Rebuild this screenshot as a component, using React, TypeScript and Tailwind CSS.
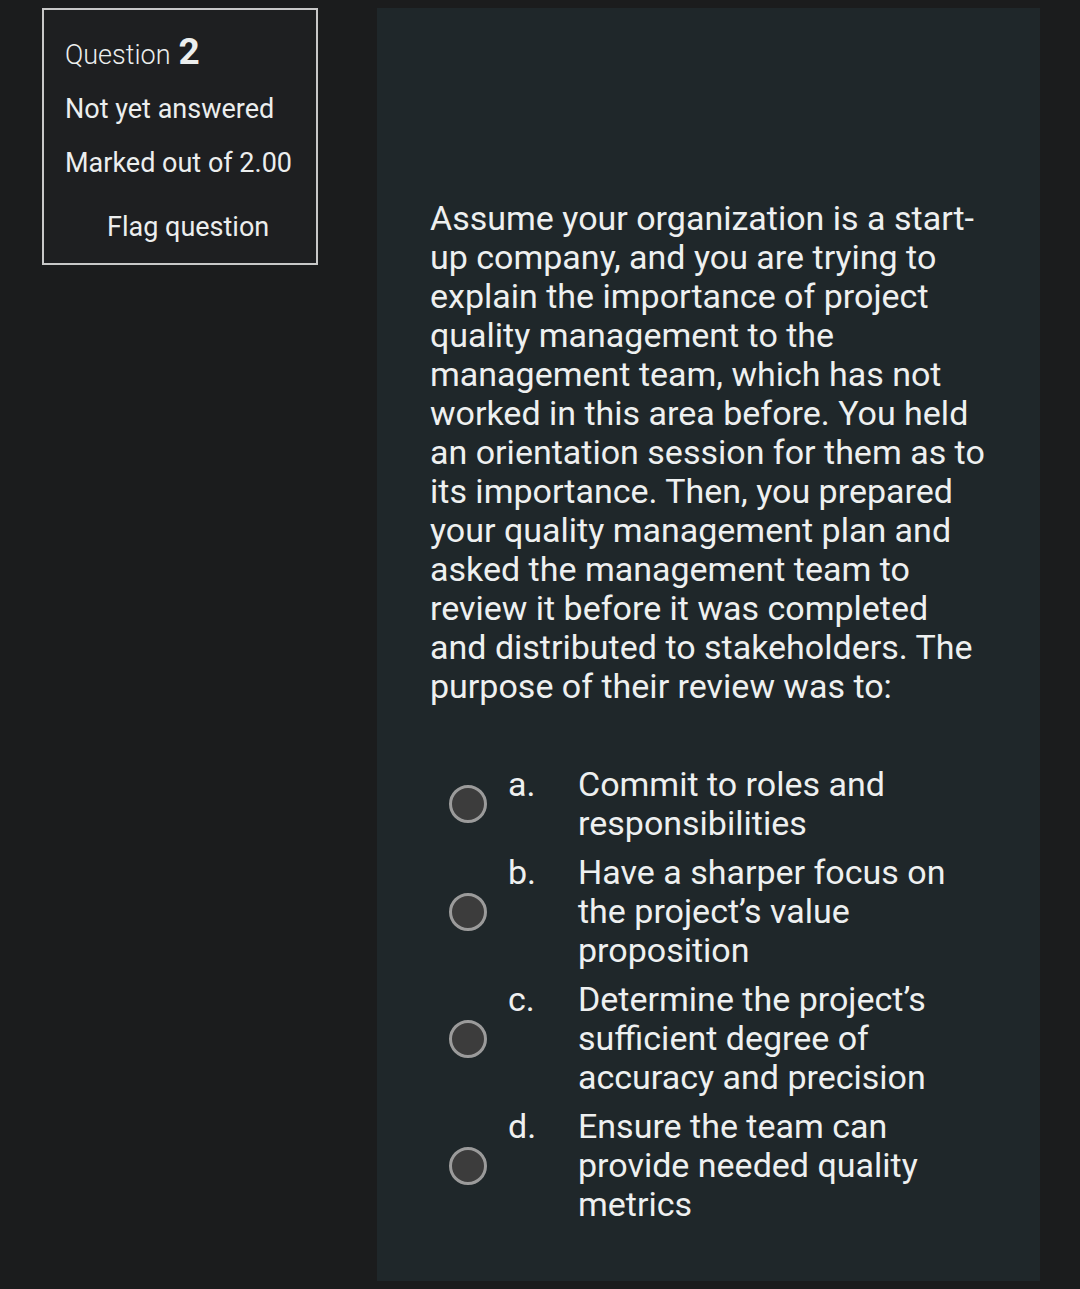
import React from "react";

const options = [
  { l: "a.", t: "Commit to roles and responsibilities" },
  { l: "b.", t: "Have a sharper focus on the project\u2019s value proposition" },
  { l: "c.", t: "Determine the project\u2019s sufficient degree of accuracy and precision" },
  { l: "d.", t: "Ensure the team can provide needed quality metrics" },
];

export default function App() {
  return (
    <div
      className="min-h-[1289px] w-[1080px] bg-[#1b1c1d] flex items-start"
      style={{ fontFamily: "Roboto, 'Noto Sans', sans-serif" }}
    >
      <div className="ml-[42px] mt-[8px] w-[276px] h-[257px] border-2 border-[#c8c8c8] bg-[#1e1f21] text-[#eceeee] pl-[21px] pt-[19px]">
        <div className="flex items-baseline h-[46px] leading-[46px]">
          <span className="text-[27px] font-light">Question</span>
          <span className="text-[37px] font-bold ml-[8px]">2</span>
        </div>
        <div className="text-[27px] leading-[32px] mt-[18px]">Not yet answered</div>
        <div className="text-[27px] leading-[32px] mt-[22px]">Marked out of 2.00</div>
        <div className="text-[27px] leading-[32px] mt-[32px] pl-[42px]">Flag question</div>
      </div>
      <div className="ml-[59px] mt-[8px] w-[663px] h-[1273px] bg-[#1f272a] pl-[53px] pt-[191px] text-[#eef0f0]">
        <p className="w-[560px] text-[34px] leading-[39px]">
          Assume your organization is a start-up company, and you are trying to explain the importance of project quality management to the management team, which has not worked in this area before. You held an orientation session for them as to its importance. Then, you prepared your quality management plan and asked the management team to review it before it was completed and distributed to stakeholders. The purpose of their review was to:
        </p>
        <div className="mt-[59px] flex flex-col gap-[10px]">
          {options.map((o) => (
            <div key={o.l} className="flex items-start">
              <div className="self-center ml-[19px] w-[38px] h-[38px] rounded-full border-[3px] border-[#9b9b9b] bg-[#3c3c3c]" />
              <div className="ml-[21px] w-[70px] text-[34px] leading-[39px]">{o.l}</div>
              <div className="w-[380px] text-[34px] leading-[39px]">{o.t}</div>
            </div>
          ))}
        </div>
      </div>
    </div>
  );
}
